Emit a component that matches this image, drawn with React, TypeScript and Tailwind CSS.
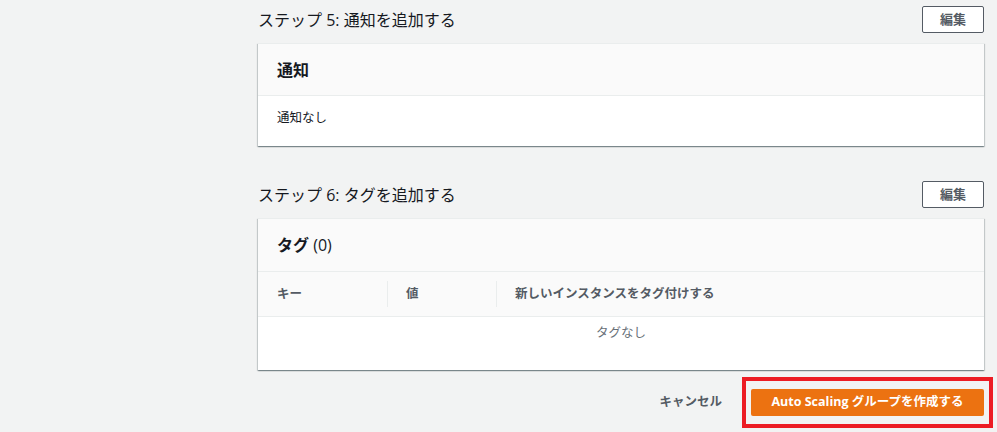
import React from "react";

const font = { fontFamily: '"Open Sans", "Noto Sans CJK JP", sans-serif' };

const EditButton: React.FC = () => (
  <button className="h-[27px] w-[62px] rounded-[2px] border border-[#545b64] bg-white text-[13px] font-bold text-[#545b64]">
    編集
  </button>
);

const StepHeader: React.FC<{ title: string }> = ({ title }) => (
  <div className="flex items-center justify-between">
    <h2 className="text-[16px] leading-[22px] text-[#16191f]">{title}</h2>
    <EditButton />
  </div>
);

const Card: React.FC<{ children: React.ReactNode }> = ({ children }) => (
  <div className="border-t border-[#eaeded] bg-white shadow-[0_1px_1px_0_rgba(0,28,36,0.3),1px_1px_1px_0_rgba(0,28,36,0.15),-1px_1px_1px_0_rgba(0,28,36,0.15)]">
    {children}
  </div>
);

const App: React.FC = () => {
  return (
    <div className="min-h-[432px] w-full bg-[#f2f3f3]" style={font}>
      <div className="ml-[258px] w-[726px] pt-[6px]">
        {/* Step 5 */}
        <StepHeader title="ステップ 5: 通知を追加する" />
        <div className="mt-[10px]">
          <Card>
            <div className="flex h-[52px] items-center border-b border-[#eaeded] bg-[#fafafa] px-[19px]">
              <h3 className="text-[16px] font-bold text-[#16191f]">通知</h3>
            </div>
            <div className="flex h-[50px] items-center px-[19px] pb-[5px] text-[12.5px] text-[#16191f]">
              通知なし
            </div>
          </Card>
        </div>

        {/* Step 6 */}
        <div className="mt-[35px]">
          <StepHeader title="ステップ 6: タグを追加する" />
        </div>
        <div className="mt-[10px]">
          <Card>
            <div className="flex h-[53px] items-center border-b border-[#eaeded] bg-[#fafafa] px-[19px]">
              <h3 className="text-[16px] text-[#16191f]">
                <span className="font-bold">タグ</span>{" "}
                <span>(0)</span>
              </h3>
            </div>
            <div className="flex h-[45px] items-center border-b border-[#eaeded] bg-[#fafafa] text-[12.5px] font-bold text-[#545b64]">
              <div className="w-[130px] border-r border-[#eaeded] py-[4px] pl-[19px]">キー</div>
              <div className="w-[109px] border-r border-[#eaeded] py-[4px] pl-[18px]">値</div>
              <div className="py-[4px] pl-[18px]">新しいインスタンスをタグ付けする</div>
            </div>
            <div className="h-[53px] pt-[7px] text-center text-[12.5px] text-[#687078]">
              タグなし
            </div>
          </Card>
        </div>

        {/* Footer */}
        <div className="mt-[18px] flex items-center justify-end gap-[29px]">
          <button className="text-[12.5px] font-bold text-[#545b64]">キャンセル</button>
          <div className="relative">
            <button className="h-[27px] w-[233px] rounded-[2px] bg-[#ec7211] text-[12.5px] font-bold text-white">
              Auto Scaling グループを作成する
            </button>
            <div className="pointer-events-none absolute -bottom-[12px] -left-[9px] -right-[9px] -top-[11px] border-[4px] border-[#ec1c24]" />
          </div>
        </div>
      </div>
    </div>
  );
};

export default App;
